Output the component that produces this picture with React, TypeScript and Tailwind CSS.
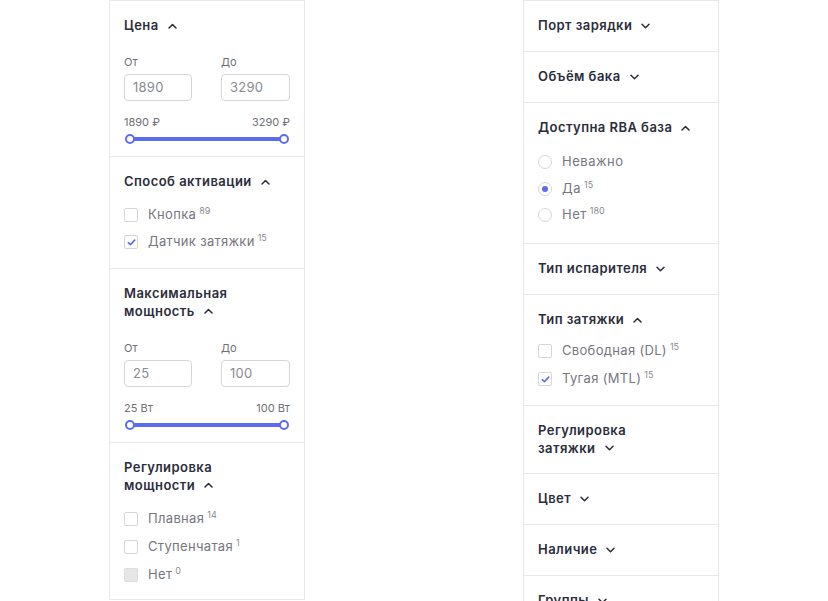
import React from "react";

const font = { fontFamily: "Inter, 'Noto Sans', sans-serif" };

function Chevron({ up }: { up?: boolean }) {
  return (
    <svg width="9" height="6" viewBox="0 0 9 6" className="ml-[9px] inline-block shrink-0" fill="none">
      {up ? (
        <path d="M1 5 L4.5 1.5 L8 5" stroke="#2b2d3c" strokeWidth="1.5" strokeLinecap="round" strokeLinejoin="round" />
      ) : (
        <path d="M1 1.2 L4.5 4.7 L8 1.2" stroke="#2b2d3c" strokeWidth="1.5" strokeLinecap="round" strokeLinejoin="round" />
      )}
    </svg>
  );
}

function Title({ lines, up }: { lines: string[]; up?: boolean }) {
  const lh = lines.length > 1 ? "leading-[18px]" : "leading-[19px]";
  return (
    <div className={"text-[13px] font-semibold tracking-[0.035em] text-[#2b2d3c] " + lh}>
      {lines.map((l, i) => (
        <div key={i} className="flex items-center">
          <span>{l}</span>
          {i === lines.length - 1 && <Chevron up={up} />}
        </div>
      ))}
    </div>
  );
}

function Section({ children, last, pb }: { children: React.ReactNode; last?: boolean; pb: string }) {
  return (
    <div className={"pl-[14px] pr-[14px] pt-[15px] " + pb + " " + (last ? "" : "border-b border-[#e9e9ec]")}>
      {children}
    </div>
  );
}

function Collapsed({ lines }: { lines: string[] }) {
  return (
    <Section pb="pb-[16px]">
      <Title lines={lines} />
    </Section>
  );
}

function Checkbox({ label, count, checked, disabled }: { label: string; count: string; checked?: boolean; disabled?: boolean }) {
  return (
    <div className="flex items-center h-[20px]">
      <div
        className={
          "w-[14px] h-[14px] rounded-[2px] border flex items-center justify-center shrink-0 " +
          (disabled ? "bg-[#e6e6e8] border-[#dcdce0]" : "border-[#d6d6da] bg-white")
        }
      >
        {checked && (
          <svg width="9" height="7" viewBox="0 0 10 8" fill="none">
            <path d="M1.3 4.2 L3.8 6.4 L8.7 1.3" stroke="#5b6cf0" strokeWidth="1.8" strokeLinecap="round" strokeLinejoin="round" />
          </svg>
        )}
      </div>
      <span className="ml-[10px] text-[13px] tracking-[0.025em] text-[#76767f]">{label}</span>
      <sup className="ml-[3px] text-[9px] text-[#8a8a92] relative -top-[4px]">{count}</sup>
    </div>
  );
}

function Radio({ label, count, checked }: { label: string; count?: string; checked?: boolean }) {
  return (
    <div className="flex items-center h-[20px]">
      <div className="w-[14px] h-[14px] rounded-full border border-[#d6d6da] bg-white flex items-center justify-center shrink-0">
        {checked && <div className="w-[6px] h-[6px] rounded-full bg-[#5b6cf0]" />}
      </div>
      <span className="ml-[10px] text-[13px] text-[#76767f] tracking-[0.04em]">{label}</span>
      {count && <sup className="ml-[3px] text-[9px] text-[#8a8a92] relative -top-[4px]">{count}</sup>}
    </div>
  );
}

function Range({ from, to, lo, hi, mt }: { from: string; to: string; lo: string; hi: string; mt: string }) {
  return (
    <div>
      <div className={mt + " flex justify-between text-[11px] leading-[14px] text-[#6f6f78]"}>
        <div className="w-[68px]">От</div>
        <div className="w-[69px]">До</div>
      </div>
      <div className="mt-[5px] flex justify-between">
        <div className="w-[68px] h-[27px] rounded-[4px] border border-[#d6d6da] flex items-center pl-[8px] text-[13px] tracking-[0.02em] text-[#8a8a92]">
          {from}
        </div>
        <div className="w-[69px] h-[27px] rounded-[4px] border border-[#d6d6da] flex items-center pl-[8px] text-[13px] tracking-[0.02em] text-[#8a8a92]">
          {to}
        </div>
      </div>
      <div className="mt-[14px] flex justify-between text-[11px] leading-[14px] text-[#6f6f78]">
        <span>{lo}</span>
        <span>{hi}</span>
      </div>
      <div className="relative mt-[5px] h-[10px] mx-[1px]">
        <div className="absolute left-[4px] right-[4px] top-[3px] h-[4px] bg-[#5b6cf0]" />
        <div className="absolute left-0 top-0 w-[10px] h-[10px] rounded-full border-2 border-[#5b6cf0] bg-white" />
        <div className="absolute right-0 top-0 w-[10px] h-[10px] rounded-full border-2 border-[#5b6cf0] bg-white" />
      </div>
    </div>
  );
}

export default function App() {
  return (
    <div className="w-[828px] h-[601px] overflow-hidden bg-white" style={font}>
      <div className="flex items-start pl-[109px] gap-[218px]">
        <div className="w-[196px] border border-[#e9e9ec]">
          <Section pb="pb-[12px]">
            <Title lines={["Цена"]} up />
            <Range mt="mt-[20px]" from="1890" to="3290" lo="1890 ₽" hi="3290 ₽" />
          </Section>
          <Section pb="pb-[16px]">
            <Title lines={["Способ активации"]} up />
            <div className="mt-[14px] flex flex-col gap-[7px]">
              <Checkbox label="Кнопка" count="89" />
              <Checkbox label="Датчик затяжки" count="15" checked />
            </div>
          </Section>
          <Section pb="pb-[12px]">
            <Title lines={["Максимальная", "мощность"]} up />
            <Range mt="mt-[21px]" from="25" to="100" lo="25 Вт" hi="100 Вт" />
          </Section>
          <Section last pb="pb-[14px]">
            <Title lines={["Регулировка", "мощности"]} up />
            <div className="mt-[15px] flex flex-col gap-[8px]">
              <Checkbox label="Плавная" count="14" />
              <Checkbox label="Ступенчатая" count="1" />
              <Checkbox label="Нет" count="0" disabled />
            </div>
          </Section>
        </div>
        <div className="w-[196px] border-x border-t border-[#e9e9ec]">
          <Collapsed lines={["Порт зарядки"]} />
          <Collapsed lines={["Объём бака"]} />
          <Section pb="pb-[18px]">
            <Title lines={["Доступна RBA база"]} up />
            <div className="mt-[15px] flex flex-col gap-[6.5px]">
              <Radio label="Неважно" />
              <Radio label="Да" count="15" checked />
              <Radio label="Нет" count="180" />
            </div>
          </Section>
          <Collapsed lines={["Тип испарителя"]} />
          <Section pb="pb-[16px]">
            <Title lines={["Тип затяжки"]} up />
            <div className="mt-[12px] flex flex-col gap-[8px]">
              <Checkbox label="Свободная (DL)" count="15" />
              <Checkbox label="Тугая (MTL)" count="15" checked />
            </div>
          </Section>
          <Collapsed lines={["Регулировка", "затяжки"]} />
          <Collapsed lines={["Цвет"]} />
          <Collapsed lines={["Наличие"]} />
          <Collapsed lines={["Группы"]} />
        </div>
      </div>
    </div>
  );
}
